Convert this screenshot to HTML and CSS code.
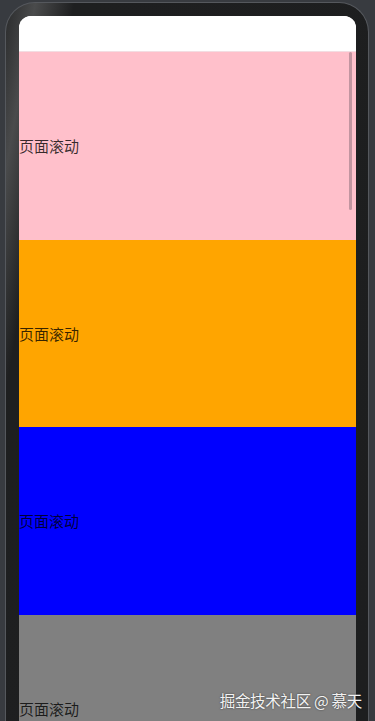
FILE: index.html
```html
<!DOCTYPE html>
<html lang="zh">
<head>
<meta charset="utf-8">
<link rel="stylesheet" href="styles.css">
</head>
<body>
<div class="frame">
  <div class="screen">
    <div class="header"></div>
    <div class="list">
      <div class="item pink">页面滚动</div>
      <div class="item orange">页面滚动</div>
      <div class="item blue">页面滚动</div>
      <div class="item gray">页面滚动</div>
    </div>
    <div class="scrollbar"></div>
  </div>
</div>
<div class="watermark">掘金技术社区 @ 慕天</div>
</body>
</html>
```
FILE: styles.css
```css
html, body {
  margin: 0;
  padding: 0;
  overflow: hidden;
}
body {
  background: #383b40;
  height: 721px;
  position: relative;
  font-family: "Noto Sans CJK SC", "Noto Sans", sans-serif;
}
.frame {
  margin: 2px 0 0 5px;
  width: 364px;
  height: 719px;
  box-sizing: border-box;
  border: 1px solid #55585d;
  border-bottom: none;
  border-radius: 30px 30px 0 0;
  background: linear-gradient(100deg, #2a2b2c 0%, #4a4b4c 6%, #1e1f20 14%, #1d1e1f 100%);
  padding: 13px 12px 0 13px;
}
.screen {
  position: relative;
  width: 337px;
  height: 705px;
  border-radius: 12px 12px 0 0;
  overflow: hidden;
  background: #ffffff;
}
.header {
  height: 36px;
  background: #ffffff;
  border-bottom: 1px solid #f3dde2;
  box-sizing: border-box;
}
.list {
  display: flex;
  flex-direction: column;
}
.item {
  flex: none;
  height: 187.5px;
  display: flex;
  align-items: center;
  font-size: 15px;
  color: rgba(0, 0, 0, 0.78);
}
.pink { background: #ffc0cb; }
.orange { background: #ffa500; }
.blue { background: #0000ff; }
.gray { background: #808080; }
.scrollbar {
  position: absolute;
  top: 36px;
  right: 4px;
  width: 3px;
  height: 158px;
  border-radius: 2px;
  background: rgba(80, 70, 80, 0.35);
}
.watermark {
  position: absolute;
  right: 13px;
  top: 689px;
  font-size: 15.5px;
  letter-spacing: -0.3px;
  color: #f2f2f2;
  text-shadow: 0 0 2px rgba(0, 0, 0, 0.6);
  white-space: nowrap;
}
```
